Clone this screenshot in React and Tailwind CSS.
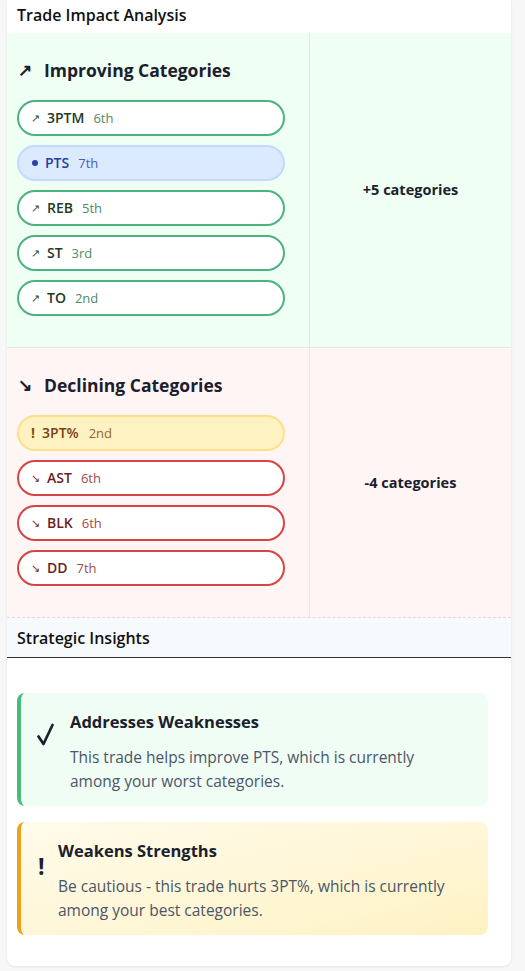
import React from 'react';

const improving = [
  { name: '3PTM', rank: '6th', kind: 'up' },
  { name: 'PTS', rank: '7th', kind: 'focus' },
  { name: 'REB', rank: '5th', kind: 'up' },
  { name: 'ST', rank: '3rd', kind: 'up' },
  { name: 'TO', rank: '2nd', kind: 'up' },
];

const declining = [
  { name: '3PT%', rank: '2nd', kind: 'warn' },
  { name: 'AST', rank: '6th', kind: 'down' },
  { name: 'BLK', rank: '6th', kind: 'down' },
  { name: 'DD', rank: '7th', kind: 'down' },
];

function Pill({ item }) {
  if (item.kind === 'focus') {
    return (
      <div className="h-9 w-[268px] rounded-full border-2 border-[#c3dafe] bg-[#dbeafe] flex items-center pl-3 text-[14px]">
        <span className="w-[6px] h-[6px] rounded-full bg-[#2b3fb0] mr-[7px] ml-[1px]" />
        <span className="flex items-baseline">
          <span className="font-semibold text-[#2a3a9c]">{item.name}</span>
          <span className="ml-[9px] text-[13px] text-[#4a5bbf]">{item.rank}</span>
        </span>
      </div>
    );
  }
  if (item.kind === 'warn') {
    return (
      <div className="h-9 w-[268px] rounded-full border-2 border-[#fbe08a] bg-[#fef2c3] flex items-center pl-3 text-[14px]">
        <span className="flex items-baseline">
          <span className="font-bold text-[#8a4a10] mr-[7px]">!</span>
          <span className="font-semibold text-[#7a3f12]">{item.name}</span>
          <span className="ml-[10px] text-[13px] text-[#9a6428]">{item.rank}</span>
        </span>
      </div>
    );
  }
  const up = item.kind === 'up';
  return (
    <div className={up
      ? 'h-9 w-[268px] rounded-full border-2 border-[#4cb27f] bg-white flex items-center pl-3 text-[14px]'
      : 'h-9 w-[268px] rounded-full border-2 border-[#d64545] bg-white flex items-center pl-3 text-[14px]'}>
      <span className={up ? 'text-[11px] text-[#2f4f3a] mr-[7px]' : 'text-[11px] text-[#7a2a2a] mr-[7px]'}>{up ? '↗' : '↘'}</span>
      <span className="flex items-baseline">
        <span className={up ? 'font-semibold text-[#1f3a29]' : 'font-semibold text-[#6b1f1f]'}>{item.name}</span>
        <span className={up ? 'ml-[9px] text-[13px] text-[#4f8a63]' : 'ml-[9px] text-[13px] text-[#a04a4a]'}>{item.rank}</span>
      </span>
    </div>
  );
}

function Section({ icon, title, items, summary, bg }) {
  return (
    <div className={`flex ${bg}`}>
      <div className="w-[303px] border-r border-[#e2e8f0] pl-[10px] pt-6 pb-[31px]">
        <h3 className="flex items-center h-[26px] text-[17.5px] font-bold text-[#1a202c] mb-[17px]">
          <span className="w-[26px] ml-[1px] text-[17px]">{icon}</span>
          {title}
        </h3>
        <div className="flex flex-col gap-[9px]">
          {items.map((it) => <Pill key={it.name} item={it} />)}
        </div>
      </div>
      <div className="flex-1 flex items-center justify-center text-[14.5px] font-bold text-[#1a202c]">
        {summary}
      </div>
    </div>
  );
}

export default function App() {
  return (
    <div className="min-h-[971px] bg-[#f7f7f8] px-[7px] pb-[3px]" style={{ fontFamily: '"Open Sans", "Noto Sans", sans-serif' }}>
      <div className="w-[504px] bg-white rounded-b-lg shadow-[0_1px_3px_rgba(0,0,0,0.08)]">
        <div className="h-[33px] flex items-center pl-[10px] text-[16px] font-semibold text-[#111] pb-[4px]">
          Trade Impact Analysis
        </div>
        <Section icon="↗" title="Improving Categories" items={improving} summary="+5 categories" bg="bg-[#f0fff4] border-b border-[#e2ece6]" />
        <Section icon="↘" title="Declining Categories" items={declining} summary="-4 categories" bg="bg-[#fff5f5] border-b border-dashed border-[#d8dde5]" />
        <div className="h-[40px] bg-[#f7fafc] border-b border-[#2d3340] flex items-center pl-[10px] text-[16px] font-semibold text-[#111]">
          Strategic Insights
        </div>
        <div className="pl-[10px] pt-[35px] pb-[31px] flex flex-col gap-4">
          <div className="w-[471px] rounded-lg border-l-4 border-[#48bb78] bg-[#f0fdf4] flex pl-[14px] pt-[17px] pb-[13px] pr-[24px]">
            <div className="w-[35px] shrink-0 pt-[13px] pl-[2px]">
              <svg width="17" height="23" viewBox="0 0 17 23" fill="none">
                <path d="M1.5 13.5 L6.5 21 L15.5 2" stroke="#1a202c" strokeWidth="2.7" strokeLinecap="round" strokeLinejoin="round" />
              </svg>
            </div>
            <div>
              <div className="text-[16.5px] font-bold text-[#1a202c] leading-[24px]">Addresses Weaknesses</div>
              <p className="mt-[11px] text-[15.5px] leading-[24px] text-[#4a5568]">
                This trade helps improve PTS, which is currently among your worst categories.
              </p>
            </div>
          </div>
          <div className="w-[471px] rounded-lg border-l-4 border-[#eda21a] bg-gradient-to-br from-[#fffbeb] to-[#fef2c4] flex pl-[14px] pt-[17px] pb-[13px] pr-[24px]">
            <div className="w-[23px] shrink-0 pt-[15px] text-[23px] font-bold text-[#1a202c] leading-[24px] pl-[3px]">!</div>
            <div>
              <div className="text-[16.5px] font-bold text-[#1a202c] leading-[24px]">Weakens Strengths</div>
              <p className="mt-[11px] text-[15.5px] leading-[24px] text-[#4a5568]">
                Be cautious - this trade hurts 3PT%, which is currently among your best categories.
              </p>
            </div>
          </div>
        </div>
      </div>
    </div>
  );
}
